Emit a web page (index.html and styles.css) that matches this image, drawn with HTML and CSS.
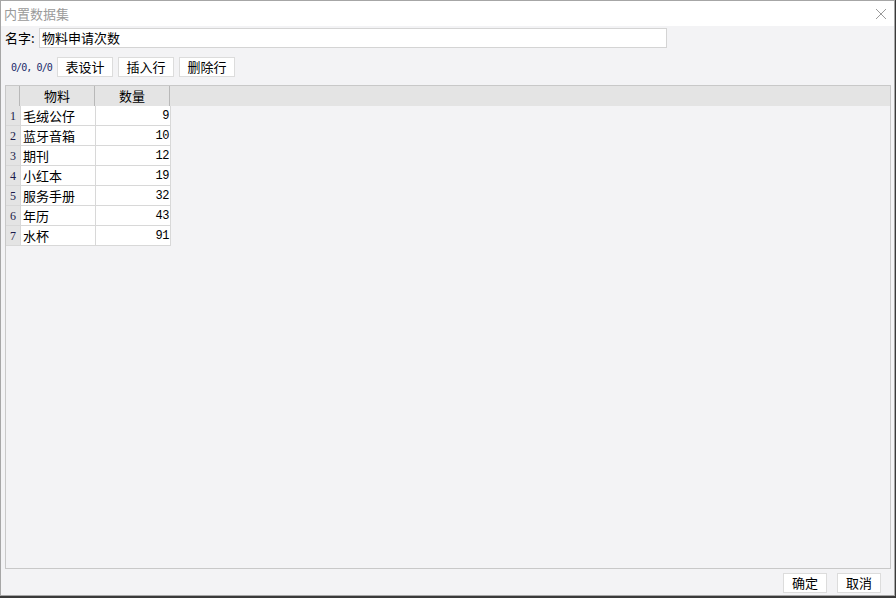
FILE: index.html
```html
<!DOCTYPE html>
<html>
<head>
<meta charset="utf-8">
<link rel="stylesheet" href="styles.css">
</head>
<body>
<div class="window">
  <div class="titlebar">
    <span class="title">内置数据集</span>
    <svg class="close" width="12" height="12" viewBox="0 0 12 12"><path d="M1 1L11 11M11 1L1 11" stroke="#9a9a9a" stroke-width="1" fill="none"/></svg>
  </div>
  <div class="content">
    <div class="name-row">
      <span class="label">名字:</span>
      <div class="input">物料申请次数</div>
    </div>
    <div class="toolbar">
      <span class="pos">0/0, 0/0</span>
      <button class="btn">表设计</button>
      <button class="btn">插入行</button>
      <button class="btn">删除行</button>
    </div>
    <div class="grid">
      <div class="header">
        <div class="hcell c0"></div>
        <div class="hcell c1">物料</div>
        <div class="hcell c2">数量</div>
      </div>
      <div class="rows">
        <div class="row"><div class="rn">1</div><div class="cell c1">毛绒公仔</div><div class="cell c2 num">9</div></div>
        <div class="row"><div class="rn">2</div><div class="cell c1">蓝牙音箱</div><div class="cell c2 num">10</div></div>
        <div class="row"><div class="rn">3</div><div class="cell c1">期刊</div><div class="cell c2 num">12</div></div>
        <div class="row"><div class="rn">4</div><div class="cell c1">小红本</div><div class="cell c2 num">19</div></div>
        <div class="row"><div class="rn">5</div><div class="cell c1">服务手册</div><div class="cell c2 num">32</div></div>
        <div class="row"><div class="rn">6</div><div class="cell c1">年历</div><div class="cell c2 num">43</div></div>
        <div class="row"><div class="rn">7</div><div class="cell c1">水杯</div><div class="cell c2 num">91</div></div>
      </div>
    </div>
    <div class="footer">
      <button class="btn fbtn">确定</button>
      <button class="btn fbtn">取消</button>
    </div>
  </div>
</div>
</body>
</html>
```
FILE: styles.css
```css
html, body {
  margin: 0;
  padding: 0;
  width: 896px;
  height: 598px;
  overflow: hidden;
  background: #3a3a3a;
  font-family: "Noto Sans CJK SC", "Noto Sans", sans-serif;
  font-size: 13px;
  color: #000;
}
.window {
  box-sizing: border-box;
  width: 895px;
  height: 596px;
  border: 1px solid #a6a6a6;
  background: #f3f3f5;
  display: flex;
  flex-direction: column;
}
.titlebar {
  height: 25px;
  background: #fff;
  display: flex;
  align-items: center;
  justify-content: space-between;
  padding: 0 7px 0 3px;
  flex: none;
}
.title {
  color: #9a9a9a;
  font-size: 13px;
  line-height: 25px;
}
.close { margin-top: 1px; }
.content {
  flex: 1;
  display: flex;
  flex-direction: column;
  padding: 2px 3px 2px 4px;
  min-height: 0;
}
.name-row {
  display: flex;
  align-items: center;
  height: 20px;
}
.label {
  width: 34px;
  line-height: 20px;
}
.input {
  box-sizing: border-box;
  width: 628px;
  height: 20px;
  background: #fff;
  border: 1px solid #d4d4d4;
  line-height: 18px;
  padding-left: 2px;
}
.toolbar {
  display: flex;
  align-items: center;
  margin-top: 9px;
  height: 20px;
}
.pos {
  font-family: "DejaVu Sans Mono", monospace;
  font-size: 10px;
  color: #1a2a6a;
  letter-spacing: -0.9px;
  margin-left: 6px;
  width: 46px;
}
.btn {
  box-sizing: border-box;
  height: 20px;
  background: #fff;
  border: 1px solid #dcdcdc;
  font-family: "Noto Sans CJK SC", sans-serif;
  font-size: 13px;
  color: #000;
  padding: 0;
  line-height: 18px;
  width: 56px;
  margin-right: 5px;
}
.grid {
  flex: 1;
  box-sizing: border-box;
  margin-top: 8px;
  width: 886px;
  border: 1px solid #c8c8c8;
  background: #f3f3f5;
}
.header {
  display: flex;
  height: 20px;
  background: #e4e4e4;
}
.hcell {
  box-sizing: border-box;
  height: 20px;
  line-height: 20px;
  text-align: center;
}
.header .c0 { width: 14px; border-right: 1px solid #b8b8b8; }
.header .c1 { width: 75px; border-right: 1px solid #b8b8b8; }
.header .c2 { width: 75px; border-right: 1px solid #b8b8b8; }
.rows {
  display: flex;
  flex-direction: column;
  width: 165px;
}
.row {
  display: flex;
  height: 20px;
}
.rn {
  box-sizing: border-box;
  width: 14px;
  background: #e4e4e4;
  border-bottom: 1px solid #d8d8d8;
  font-family: "Liberation Serif", serif;
  font-size: 12px;
  color: #1a1a4a;
  text-align: center;
  line-height: 20px;
}
.cell {
  box-sizing: border-box;
  background: #fff;
  border-right: 1px solid #d8d8d8;
  border-bottom: 1px solid #d8d8d8;
  height: 20px;
  line-height: 19px;
}
.row .c1 { width: 76px; padding-left: 2px; border-left: 1px solid #d8d8d8; }
.row .c2 { width: 75px; }
.num {
  text-align: right;
  padding-right: 1px;
  font-family: "Liberation Mono", monospace;
  font-size: 12px;
  line-height: 21px;
  color: #000;
  letter-spacing: -0.5px;
}
.footer {
  display: flex;
  justify-content: flex-end;
  margin-top: 4px;
  height: 20px;
  padding-right: 10px;
}
.fbtn {
  width: 44px;
  margin-left: 10px;
  margin-right: 0;
}
```
